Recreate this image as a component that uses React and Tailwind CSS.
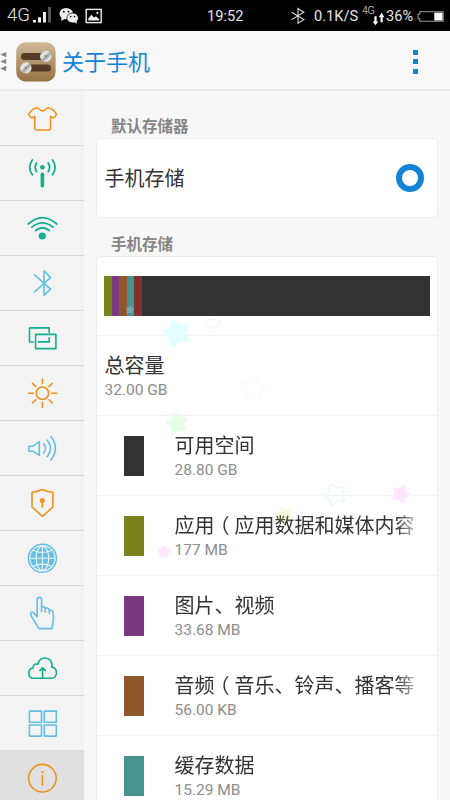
import { useState } from 'react';

const ORANGE = '#f0921e';
const GREEN = '#12ad90';
const BLUE = '#62c0e6';

const MENU = [
  {
    id: 'theme', color: ORANGE,
    icon: <path d="M36.8 16.7C33.5 17.4 30.5 20 28.6 23.2Q29.6 26 32 26.9L34.8 25.4V37Q34.8 39 36.8 39H48.6Q50.6 39 50.6 37V25.4L53.4 26.9Q55.6 26 56.4 23.2C54.6 20 51.6 17.4 48.4 16.7C46.2 16.7 45.8 19.9 42.5 19.9C39.2 19.9 39 16.7 36.8 16.7Z" />,
  },
  {
    id: 'network', color: GREEN,
    icon: (
      <>
        <path d="M32.3 14Q27 21.3 32.3 28.7M36.6 17Q33.8 21.3 36.6 25.8M52.5 14Q57.8 21.3 52.5 28.7M48.2 17Q51 21.3 48.2 25.8" strokeWidth="1.8" />
        <circle cx="42.4" cy="21.2" r="2.3" fill="currentColor" stroke="none" />
        <path d="M42.4 28.3V39.8" strokeWidth="3.6" />
      </>
    ),
  },
  {
    id: 'wifi', color: GREEN,
    icon: (
      <>
        <path d="M28.2 23Q42.4 10.2 56.8 23M31.9 26.2Q42.4 17.6 53 26.2M35.7 29.5Q42.4 24 49.4 29.5" strokeWidth="1.7" />
        <circle cx="42.3" cy="35" r="3.6" fill="currentColor" stroke="none" />
      </>
    ),
  },
  { id: 'bluetooth', color: BLUE, icon: <path d="M34.5 18.9L50.6 33.2L44 39.3V14.7L50.6 21.6L34.5 36" /> },
  {
    id: 'display', color: GREEN,
    icon: (
      <>
        <path d="M49.2 21.4V16.9H29.5V31H33.3M38.4 30.9H49.2V26.8" />
        <rect x="35.6" y="23.4" width="20.3" height="14.2" />
      </>
    ),
  },
  {
    id: 'brightness', color: ORANGE,
    icon: (
      <>
        <circle cx="42.4" cy="27.2" r="6.2" />
        <path d="M42.4 13.4V17.8M42.4 36.6V41.2M28.6 27.3H33.3M51.5 27.3H56.6M32.4 17.4L35.8 20.6M52.3 17.4L49 20.6M32.4 37L35.8 33.8M52.3 37L49 33.8" />
      </>
    ),
  },
  {
    id: 'sound', color: BLUE,
    icon: <path d="M28.9 25.2H33L39.3 20.6V34.4L33 30.2H28.9ZM43.6 22.9Q47.6 27.4 43.6 32.1M47.2 19.2Q54 27.3 47.2 35.6M51 15.6Q59.8 27.3 51 39" />,
  },
  {
    id: 'security', color: ORANGE,
    icon: (
      <>
        <path d="M42.4 13.6Q37 16 32 16.3V31L42.4 40.4L52.9 31V16.3Q47.6 16 42.4 13.6Z" />
        <circle cx="42.3" cy="24.6" r="2.5" fill="currentColor" stroke="none" />
        <path d="M42.3 24.6V31" />
      </>
    ),
  },
  {
    id: 'language', color: BLUE,
    icon: (
      <>
        <circle cx="42.4" cy="27.3" r="14" strokeWidth="1.5" />
        <circle cx="42.4" cy="27.3" r="12.1" fill="currentColor" stroke="none" />
        <g stroke="#f3f3f3" strokeWidth="1.1">
          <path d="M42.4 15.5V39M30.5 27.3H54.3M33.5 19.5Q42.4 23.4 51.3 19.5M33.5 35Q42.4 31.2 51.3 35" />
          <ellipse cx="42.4" cy="27.3" rx="6.3" ry="12.1" />
        </g>
      </>
    ),
  },
  {
    id: 'gesture', color: BLUE,
    icon: <path d="M38.9 42.6L31.8 30.9Q29.7 27.4 31.2 26.5Q33 25.6 35 28.3L37.2 31V13.6Q37.2 11.4 39.4 11.4Q41.6 11.4 41.6 13.6V25.6V21.2Q44.9 19.7 45.2 22.2L45.4 26.2L45.2 22.6Q48.9 21.2 49.2 23.9L49.4 27.6L49.2 24.6Q52.7 23.4 53 26.4Q53.7 32.5 53.2 35L51.9 42.6Z" />,
  },
  {
    id: 'cloud', color: GREEN,
    icon: <path d="M34.2 37.3C30.7 37.3 28.8 35 28.8 32.2C28.8 29.4 30.6 27.2 33.2 27C32.6 24.3 34.6 22.4 37.8 23.2C38.7 19.3 41.5 17 45 17C49.4 17 52.8 20.6 51.8 26.3C54.8 26.5 56.4 28.8 56.4 31.7C56.4 35 54.4 37.3 51.4 37.3ZM42.6 37V27.2M39.9 29.6L42.6 26.9L45.3 29.6" />,
  },
  {
    id: 'apps', color: BLUE,
    icon: <path d="M29.4 15.1H41.5V26.2H29.4ZM44.3 15.1H56.3V26.2H44.3ZM29.4 29H41.5V40.1H29.4ZM44.3 29H56.3V40.1H44.3Z" />,
  },
  {
    id: 'about', color: ORANGE,
    icon: (
      <>
        <circle cx="42.4" cy="27.2" r="13.8" />
        <path d="M42.4 24.6V34" strokeWidth="1.6" />
        <circle cx="42.4" cy="21.2" r="1.1" fill="currentColor" stroke="none" />
      </>
    ),
  },
];

const ITEMS = [
  { name: '可用空间', size: '28.80 GB', swatch: 'bg-[#333333]' },
  { name: '应用（应用数据和媒体内容', size: '177 MB', swatch: 'bg-[#78831c]' },
  { name: '图片、视频', size: '33.68 MB', swatch: 'bg-[#7a3980]' },
  { name: '音频（音乐、铃声、播客等', size: '56.00 KB', swatch: 'bg-[#90572c]' },
  { name: '缓存数据', size: '15.29 MB', swatch: 'bg-[#479390]' },
];

const STAR = 'M0 -8.5L3.2 -4L8.6 -2.8L5 1.6L5.4 7.4L0 5.3L-5.4 7.4L-5 1.6L-8.6 -2.8L-3.2 -4Z';

function StatusBar() {
  return (
    <div className="flex h-[31px] shrink-0 items-center bg-black font-['Roboto','Liberation_Sans',sans-serif] text-[14.6px] text-[#e6e6e6]">
      <span className="ml-[7px] w-[25px] text-[18.5px] leading-none font-light">4G</span>
      <svg className="h-[31px] w-[76px]" viewBox="32 0 76 31">
        <path d="M33 19.9H36V22.6H33ZM38 17.2H41V22.6H38ZM43 12H46V22.6H43Z" fill="#eee" />
        <path d="M48 7H51V22.6H48Z" fill="#555" />
        <ellipse cx="66.2" cy="13.6" rx="6.7" ry="5.7" fill="#eee" />
        <path d="M61.5 17L61.2 21L65 18.7Z" fill="#eee" />
        <ellipse cx="72.6" cy="18" rx="5.8" ry="4.9" fill="#eee" stroke="#000" strokeWidth=".7" />
        <path d="M74 22L76.8 23.8L76.5 20.8Z" fill="#eee" />
        <circle cx="63.8" cy="11.7" r=".9" />
        <circle cx="68.5" cy="11.7" r=".9" />
        <circle cx="70.8" cy="16.6" r=".8" />
        <circle cx="74.5" cy="16.6" r=".8" />
        <rect x="86.2" y="9.4" width="15" height="13.2" fill="none" stroke="#eee" strokeWidth="1.4" />
        <path d="M88.3 20.5V18.6L91.4 14.8L94 17.6L96 16.2L99.2 19.2V20.5Z" fill="#eee" />
        <circle cx="97.4" cy="12.9" r="1.1" fill="#eee" />
      </svg>
      <span className="ml-[99px] w-[83px] pt-[2px]">19:52</span>
      <svg className="h-[31px] w-[16px]" viewBox="290 0 16 31" fill="none" stroke="#ddd" strokeWidth="1.1">
        <path d="M291.6 12.2L303.8 19.6L298 23.2V8.6L303.8 12.2L291.6 19.6" />
      </svg>
      <span className="ml-[8px] w-[48px] pt-[2px]">0.1K/S</span>
      <span className="-mt-[9px] w-[11px] text-[10.5px] leading-none font-light tracking-[-0.3px]">4G</span>
      <svg className="h-[31px] w-[14px]" viewBox="373 0 14 31" fill="#fff">
        <path d="M374.4 16.3H376.6V21.6H378.4L375.5 25.2L372.7 21.6H374.4Z" />
        <path d="M380.5 22.3H382.7V17.2H384.5L381.6 12.8L378.8 17.2H380.5Z" />
      </svg>
      <span className="-ml-[1px] w-[31px] pt-[2px]">36%</span>
      <svg className="h-[31px] w-[28px]" viewBox="417 0 28 31">
        <path d="M419.8 11.7H443.2V21.2H419.8V18.8H418V14.3H419.8Z" fill="none" stroke="#999" strokeWidth="1.1" />
        <rect x="434.3" y="12.7" width="8.2" height="7.8" fill="#fff" />
      </svg>
    </div>
  );
}

function AppIcon() {
  return (
    <svg className="h-10 w-10" viewBox="0 0 40 40">
      <defs>
        <linearGradient id="wood" x1="0" y1="0" x2="0" y2="1">
          <stop offset="0" stopColor="#d1b899" />
          <stop offset="1" stopColor="#957240" />
        </linearGradient>
        <linearGradient id="metal" x1="0" y1="0" x2="1" y2="1">
          <stop offset="0" stopColor="#989898" />
          <stop offset=".35" stopColor="#eeeeee" />
          <stop offset=".55" stopColor="#a3a3a3" />
          <stop offset=".75" stopColor="#e8e8e8" />
          <stop offset="1" stopColor="#888888" />
        </linearGradient>
      </defs>
      <rect x=".2" y=".2" width="39.4" height="39.4" rx="9.5" fill="url(#wood)" />
      <rect x="5" y="11" width="29" height="7" rx="3.5" fill="#553b26" />
      <rect x="6" y="22.5" width="29" height="7" rx="3.5" fill="#553b26" />
      <circle cx="29.8" cy="14.3" r="5.8" fill="url(#metal)" />
      <circle cx="9.8" cy="25.8" r="5.8" fill="url(#metal)" />
      <path d="M28.6 13.1L31 15.5M31 13.1L28.6 15.5M8.6 24.6L11 27M11 24.6L8.6 27" stroke="#777" strokeWidth=".9" />
    </svg>
  );
}

function Header() {
  return (
    <header className="flex h-[60px] shrink-0 items-center border-b-2 border-[#ebebeb] bg-[#f8f8f8]">
      <svg className="mt-[2px] h-6 w-4" viewBox="0 0 16 24" fill="#808080">
        <path d="M.3 5.6L6.2 3V8.2ZM.3 12.5L6.2 9.9V15.1ZM.3 19.4L6.2 16.8V22Z" />
      </svg>
      <div className="mt-[3px]"><AppIcon /></div>
      <h1 className="mt-[5px] ml-[6px] text-[22px] leading-none text-[#1284d6]">关于手机</h1>
      <button className="mt-[3px] mr-[32px] ml-auto flex flex-col gap-[4.5px]">
        <span className="h-[5px] w-[5px] bg-[#1284d6]" />
        <span className="h-[5px] w-[5px] bg-[#1284d6]" />
        <span className="h-[5px] w-[5px] bg-[#1284d6]" />
      </button>
    </header>
  );
}

function Sidebar({ active, onSelect }) {
  return (
    <nav className="w-[84px] shrink-0 overflow-hidden bg-[#f3f3f3]">
      {MENU.map(m => (
        <button
          key={m.id}
          onClick={() => onSelect(m.id)}
          className={`block h-[55px] w-full border-b border-[#d8d8d8] ${active === m.id ? 'bg-[#e0e0e0]' : ''}`}
        >
          <svg
            className="h-[54px] w-[84px]"
            viewBox="0 0 84 54"
            fill="none"
            stroke="currentColor"
            strokeWidth="1.6"
            strokeLinecap="round"
            strokeLinejoin="round"
            style={{ color: m.color }}
          >
            {m.icon}
          </svg>
        </button>
      ))}
    </nav>
  );
}

// half-width form of the bracket, centred in a full-width cell
function Name({ text }) {
  return text.split(/(（)/).map((part, i) => (
    part === '（'
      ? <span key={i} className="pr-[5px] pl-[5px] [font-feature-settings:'halt']">{part}</span>
      : part
  ));
}

function Stars() {
  return (
    <svg className="pointer-events-none absolute inset-0 h-full w-full" viewBox="0 0 450 800">
      <g strokeLinejoin="round" strokeWidth="4">
        <path d={STAR} transform="translate(177 333) rotate(-18) scale(1.3)" fill="#e3ffff" stroke="#e3ffff" />
        <path d={STAR} transform="translate(177 423.5) rotate(-12)" fill="#e4ffe2" stroke="#e4ffe2" />
        <path d={STAR} transform="translate(401 494) rotate(22) scale(.87)" fill="#ffe8ff" stroke="#ffe8ff" />
        <path d={STAR} transform="translate(164 552) rotate(4) scale(.62)" fill="#ffe8ff" stroke="#ffe8ff" />
        <path d={STAR} transform="translate(284 515) rotate(-15) scale(.8)" fill="#c8f04a" stroke="#c8f04a" opacity=".18" />
        <path d={STAR} transform="translate(130 310) rotate(10) scale(.4)" fill="#a8d0e0" stroke="#a8d0e0" opacity=".4" />
      </g>
      <g fill="none" strokeLinejoin="round" strokeWidth="1.2">
        <path d={STAR} transform="translate(335 494.5) rotate(-20) scale(1.35)" stroke="#f1f6f6" />
        <path d={STAR} transform="translate(254 389) rotate(10) scale(1.4)" stroke="#fbfbfb" />
        <path d="M205 322L209 319.5H216L221.5 322L217.5 325.5L213 328.5L208.5 326Z" stroke="#f7f7f7" />
      </g>
    </svg>
  );
}

export default function App() {
  const [active, setActive] = useState('about');

  return (
    <div className="relative flex h-screen w-full flex-col overflow-hidden bg-[#f7f7f7] font-['Roboto','Noto_Sans_CJK_SC',sans-serif]">
      <StatusBar />
      <Header />
      <div className="flex min-h-0 flex-1">
        <Sidebar active={active} onSelect={setActive} />
        <main className="min-w-0 flex-1 overflow-hidden pr-[12px] pl-[12px]">
          <h2 className="flex h-[47px] items-end pb-[2px] pl-[15px] text-[15.5px] leading-[17px] font-bold text-[#858585]">默认存储器</h2>
          <section className="flex h-[80px] items-center justify-between rounded border border-[#ececec] bg-white pr-[13.5px] pl-[7.5px]">
            <span className="pt-[2px] text-[20px] text-[#333]">手机存储</span>
            <span className="h-[28px] w-[28px] rounded-full border-[6.5px] border-[#1284d6]" />
          </section>
          <h2 className="flex h-[38px] items-end pb-[2px] pl-[15px] text-[15.5px] leading-[17px] font-bold text-[#858585]">手机存储</h2>
          <section className="rounded border border-[#ececec] bg-white">
            <div className="h-[79px] border-b border-[#f3f3f3] px-[7px] pt-[19px]">
              <div className="flex h-[40px] bg-[#333333]">
                <span className="w-[7.6px] bg-[#78831c]" />
                <span className="w-[7.6px] bg-[#7a3980]" />
                <span className="w-[7.6px] bg-[#90572c]" />
                <span className="w-[7.6px] bg-[#479390]" />
                <span className="w-[7.6px] bg-[#803030]" />
              </div>
            </div>
            <div className="h-20 border-b border-[#f3f3f3] pt-[17px] pl-[7.5px]">
              <div className="text-[20px] leading-[26px] text-[#333]">总容量</div>
              <div className="text-[15.5px] leading-[22px] text-[#8c8c8c]">32.00 GB</div>
            </div>
            {ITEMS.map(item => (
              <div key={item.name} className="flex h-20 border-b border-[#f3f3f3] pl-[27px]">
                <span className={`mt-5 h-10 w-5 shrink-0 ${item.swatch}`} />
                <div className="ml-[30.5px] w-[240px] pt-[17px]">
                  <div className="text-[20px] leading-[26px] whitespace-nowrap text-[#333] [mask-image:linear-gradient(to_right,black_92%,transparent_104%)]">
                    <Name text={item.name} />
                  </div>
                  <div className="text-[15.5px] leading-[22px] text-[#8c8c8c]">{item.size}</div>
                </div>
              </div>
            ))}
          </section>
        </main>
      </div>
      <Stars />
    </div>
  );
}
